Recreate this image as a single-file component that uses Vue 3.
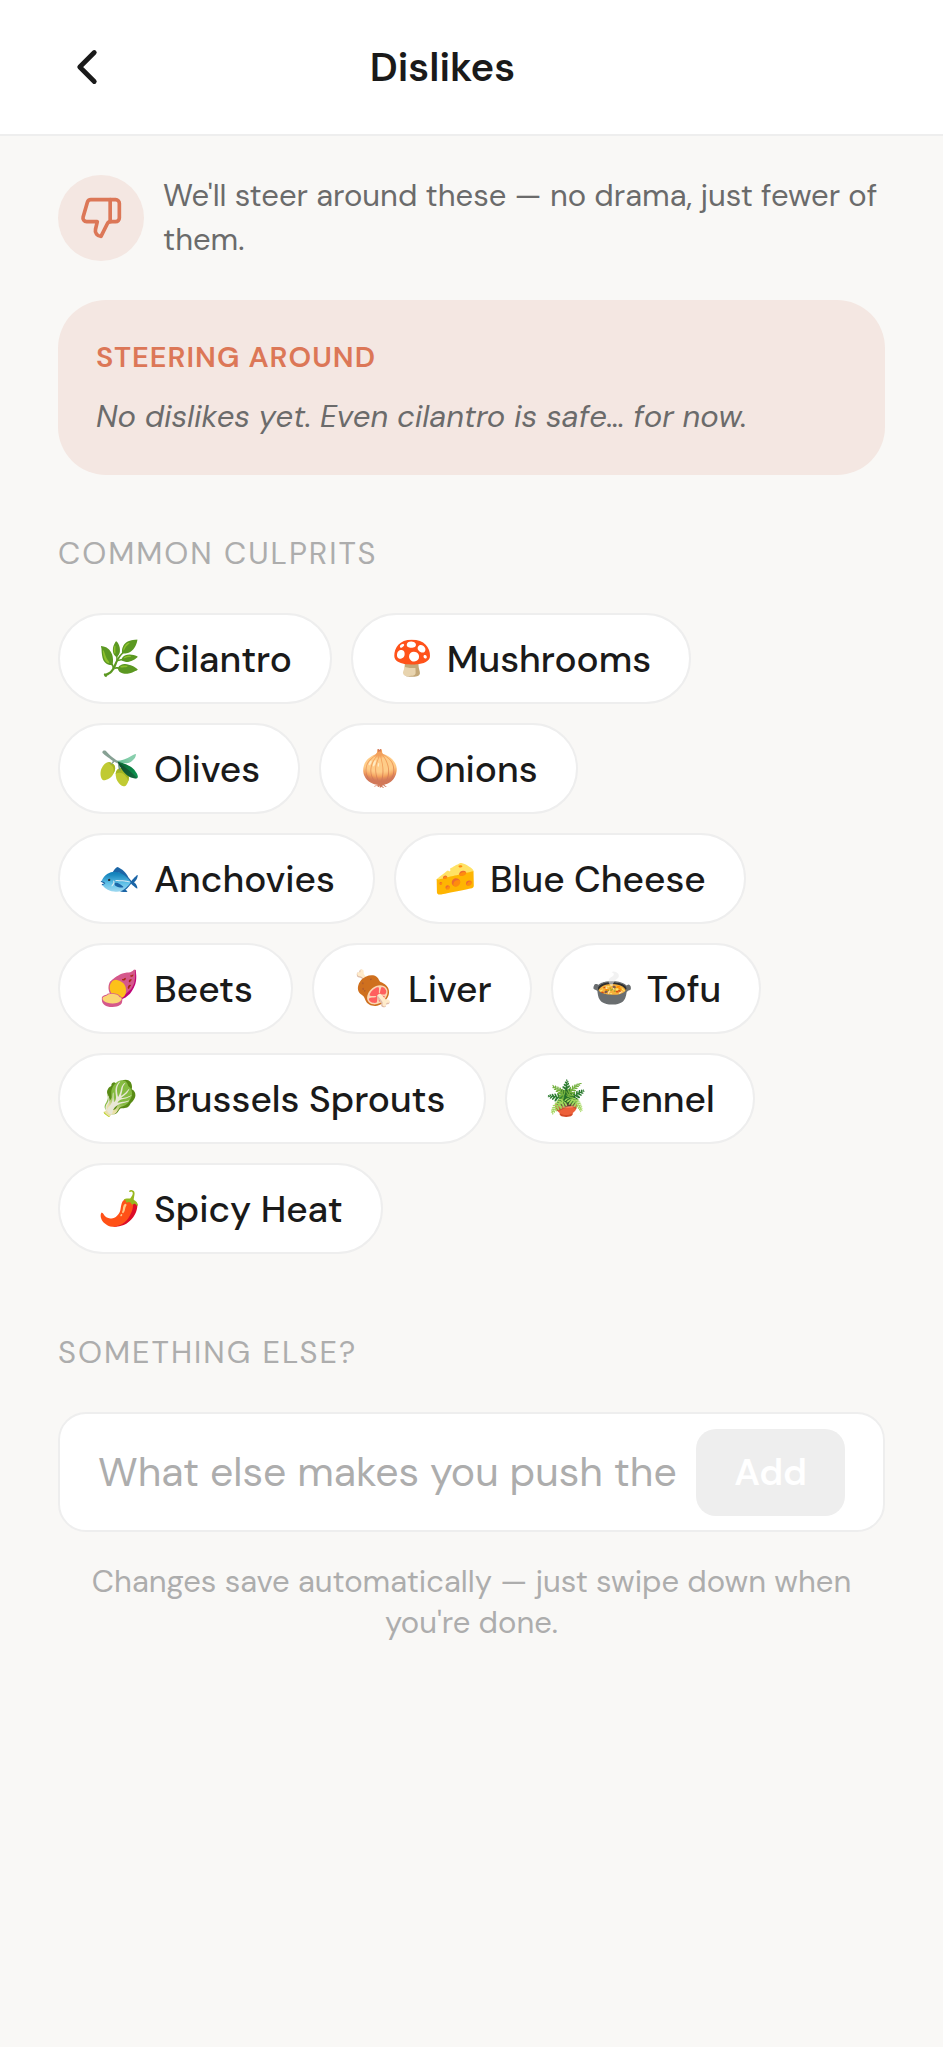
<template>
  <div class="page">
    <header class="header">
      <button class="back" type="button" aria-label="Back">
        <svg width="58" height="58" viewBox="0 0 24 24" fill="none" stroke="currentColor" stroke-width="2" stroke-linecap="round" stroke-linejoin="round">
          <path d="M15 18l-6-6 6-6" />
        </svg>
      </button>
      <h1 class="title">Dislikes</h1>
      <span class="header-spacer"></span>
    </header>

    <main class="content">
      <div class="intro">
        <span class="intro-icon">
          <svg width="44" height="44" viewBox="0 0 24 24" fill="none" stroke="currentColor" stroke-width="2" stroke-linecap="round" stroke-linejoin="round">
            <path d="M17 14V2" />
            <path d="M9 18.12 10 14H4.17a2 2 0 0 1-1.92-2.56l2.33-8A2 2 0 0 1 6.5 2H20a2 2 0 0 1 2 2v8a2 2 0 0 1-2 2h-2.76a2 2 0 0 0-1.79 1.11L12 22a3.13 3.13 0 0 1-3-3.88Z" />
          </svg>
        </span>
        <p class="intro-text">We'll steer around these — no drama, just fewer of them.</p>
      </div>

      <section class="summary">
        <h2 class="summary-title">STEERING AROUND</h2>
        <p v-if="selected.length === 0" class="summary-empty">No dislikes yet. Even cilantro is safe… for now.</p>
        <p v-else class="summary-list">{{ selected.join(', ') }}</p>
      </section>

      <h2 class="section-title">COMMON CULPRITS</h2>
      <div class="chips">
        <button v-for="item in culprits" :key="item.name" type="button" class="chip" :class="{ active: selected.includes(item.name) }" @click="toggle(item.name)">
          <span class="chip-emoji">{{ item.emoji }}</span>
          <span>{{ item.name }}</span>
        </button>
      </div>

      <h2 class="section-title"><label for="custom">SOMETHING ELSE?</label></h2>
      <form class="add-box" @submit.prevent="addCustom">
        <input id="custom" v-model="custom" class="add-input" type="text" placeholder="What else makes you push the plate away?">
        <button class="add-button" type="submit" :disabled="!custom.trim()">Add</button>
      </form>
      <p class="footnote">Changes save automatically — just swipe down when you're done.</p>
    </main>
  </div>
</template>

<script setup>
import { ref } from 'vue'

const culprits = [
  { emoji: '🌿', name: 'Cilantro' },
  { emoji: '🍄', name: 'Mushrooms' },
  { emoji: '🫒', name: 'Olives' },
  { emoji: '🧅', name: 'Onions' },
  { emoji: '🐟', name: 'Anchovies' },
  { emoji: '🧀', name: 'Blue Cheese' },
  { emoji: '🍠', name: 'Beets' },
  { emoji: '🍖', name: 'Liver' },
  { emoji: '🍲', name: 'Tofu' },
  { emoji: '🥬', name: 'Brussels Sprouts' },
  { emoji: '🪴', name: 'Fennel' },
  { emoji: '🌶️', name: 'Spicy Heat' },
]

const selected = ref([])
const custom = ref('')

function toggle(name) {
  if (selected.value.includes(name)) {
    selected.value = selected.value.filter((n) => n !== name)
  } else {
    selected.value.push(name)
  }
}

function addCustom() {
  const name = custom.value.trim()
  if (name && !selected.value.includes(name)) {
    selected.value.push(name)
  }
  custom.value = ''
}
</script>

<style>
body {
  background: #f9f8f6;
}
</style>

<style scoped>
.page {
  min-height: 100vh;
  background: #f9f8f6;
  color: #1a1a1a;
  font-family: 'DM Sans', Inter, sans-serif;
}
h1, h2, p {
  margin: 0;
}
button, input {
  font: inherit;
  color: inherit;
}
.header {
  display: flex;
  align-items: center;
  height: 134px;
  padding: 0 58px;
  background: #fff;
  border-bottom: 2px solid #eeeeee;
}
.back {
  display: flex;
  width: 58px;
  padding: 0;
  border: 0;
  background: none;
  cursor: pointer;
}
.title {
  flex: 1;
  text-align: center;
  font-size: 40px;
  font-weight: 600;
}
.header-spacer {
  width: 116px;
}
.content {
  padding: 38px 58px;
}
.intro {
  display: flex;
  align-items: center;
  gap: 19px;
}
.intro-icon {
  display: flex;
  flex: none;
  align-items: center;
  justify-content: center;
  width: 86px;
  height: 86px;
  border-radius: 50%;
  background: #f4e7e2;
  color: #dc7757;
}
.intro-text {
  font-size: 31px;
  line-height: 44px;
  color: #6b6b6b;
}
.summary {
  margin-top: 38px;
  padding: 38px;
  border-radius: 48px;
  background: #f4e7e2;
}
.summary-title {
  margin-bottom: 20px;
  font-size: 29px;
  line-height: 38px;
  font-weight: 600;
  letter-spacing: 1px;
  color: #dc7757;
}
.summary-empty, .summary-list {
  font-size: 31px;
  line-height: 41px;
  color: #6b6b6b;
}
.summary-empty {
  font-style: italic;
}
.section-title {
  margin: 58px 0 39px;
  font-size: 31px;
  line-height: 41px;
  font-weight: 400;
  letter-spacing: 2px;
  color: #adadad;
}
.chips {
  display: flex;
  flex-wrap: wrap;
  gap: 19px;
  margin-bottom: 78px;
}
.chip {
  display: flex;
  align-items: center;
  gap: 14px;
  height: 91px;
  padding: 0 38px;
  border: 2px solid #eeeeee;
  border-radius: 48px;
  background: #fff;
  font-size: 37px;
  font-weight: 500;
  cursor: pointer;
}
.chip.active {
  border-color: #dc7757;
  background: #f4e7e2;
}
.chip-emoji {
  font-size: 34px;
}
.add-box {
  display: flex;
  align-items: center;
  gap: 19px;
  height: 120px;
  box-sizing: border-box;
  padding: 0 38px;
  border: 2px solid #eeeeee;
  border-radius: 28px;
  background: #fff;
}
.add-input {
  flex: 1;
  min-width: 0;
  padding: 0;
  border: 0;
  outline: 0;
  background: none;
  font-size: 41px;
}
.add-input::placeholder {
  color: #adadad;
  opacity: 1;
}
.add-button {
  height: 87px;
  padding: 0 38px;
  border: 0;
  border-radius: 20px;
  background: #dc7757;
  color: #fff;
  font-size: 37px;
  font-weight: 600;
  cursor: pointer;
}
.add-button:disabled {
  background: #eeeeee;
  cursor: default;
}
.footnote {
  margin-top: 29px;
  padding: 0 19px;
  text-align: center;
  font-size: 31px;
  line-height: 41px;
  color: #adadad;
}
</style>
